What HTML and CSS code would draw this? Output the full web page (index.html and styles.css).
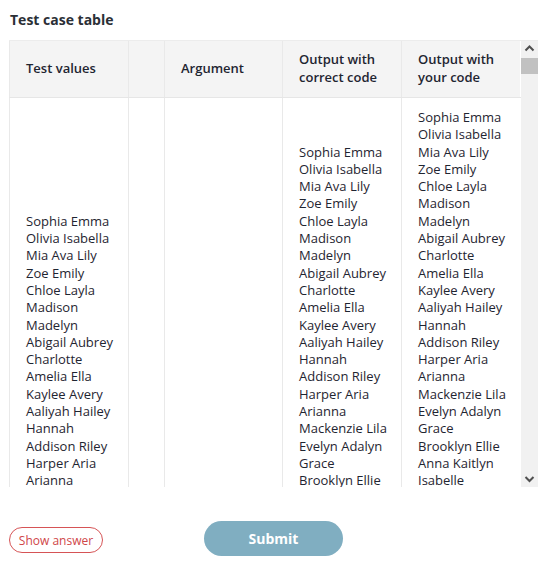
FILE: index.html
```html
<!DOCTYPE html>
<html lang="en">
<head>
<meta charset="utf-8">
<title>Test case table</title>
<link rel="stylesheet" href="styles.css">
</head>
<body>
<div class="page">
  <h2 class="title">Test case table</h2>
  <div class="frame">
    <div class="viewport">
      <table class="cases">
        <colgroup>
          <col class="c-values">
          <col class="c-gap">
          <col class="c-arg">
          <col class="c-out">
          <col class="c-out">
        </colgroup>
        <thead>
          <tr>
            <th>Test values</th>
            <th></th>
            <th>Argument</th>
            <th>Output with correct code</th>
            <th>Output with your code</th>
          </tr>
        </thead>
        <tbody>
          <tr>
            <td>
              <div class="line">Sophia Emma</div><div class="line">Olivia Isabella</div><div class="line">Mia Ava Lily</div><div class="line">Zoe Emily</div><div class="line">Chloe Layla</div><div class="line">Madison</div><div class="line">Madelyn</div><div class="line">Abigail Aubrey</div><div class="line">Charlotte</div><div class="line">Amelia Ella</div><div class="line">Kaylee Avery</div><div class="line">Aaliyah Hailey</div><div class="line">Hannah</div><div class="line">Addison Riley</div><div class="line">Harper Aria</div><div class="line">Arianna</div><div class="line">Mackenzie Lila</div><div class="line">Evelyn Adalyn</div>
            </td>
            <td></td>
            <td></td>
            <td>
              <div class="line">Sophia Emma</div><div class="line">Olivia Isabella</div><div class="line">Mia Ava Lily</div><div class="line">Zoe Emily</div><div class="line">Chloe Layla</div><div class="line">Madison</div><div class="line">Madelyn</div><div class="line">Abigail Aubrey</div><div class="line">Charlotte</div><div class="line">Amelia Ella</div><div class="line">Kaylee Avery</div><div class="line">Aaliyah Hailey</div><div class="line">Hannah</div><div class="line">Addison Riley</div><div class="line">Harper Aria</div><div class="line">Arianna</div><div class="line">Mackenzie Lila</div><div class="line">Evelyn Adalyn</div><div class="line">Grace</div><div class="line">Brooklyn Ellie</div><div class="line">Anna Kaitlyn</div><div class="line">Isabelle</div><div class="line">Natalie</div><div class="line">Leah</div><div class="line">Audrey</div><div class="line">Kylie</div>
            </td>
            <td>
              <div class="line">Sophia Emma</div><div class="line">Olivia Isabella</div><div class="line">Mia Ava Lily</div><div class="line">Zoe Emily</div><div class="line">Chloe Layla</div><div class="line">Madison</div><div class="line">Madelyn</div><div class="line">Abigail Aubrey</div><div class="line">Charlotte</div><div class="line">Amelia Ella</div><div class="line">Kaylee Avery</div><div class="line">Aaliyah Hailey</div><div class="line">Hannah</div><div class="line">Addison Riley</div><div class="line">Harper Aria</div><div class="line">Arianna</div><div class="line">Mackenzie Lila</div><div class="line">Evelyn Adalyn</div><div class="line">Grace</div><div class="line">Brooklyn Ellie</div><div class="line">Anna Kaitlyn</div><div class="line">Isabelle</div><div class="line">Natalie</div><div class="line">Leah</div><div class="line">Audrey</div><div class="line">Kylie</div><div class="line">Sarah</div><div class="line">Alexa</div><div class="line">Peyton</div><div class="line">Ellie</div>
            </td>
          </tr>
        </tbody>
      </table>
    </div>
    <div class="scrollbar" aria-hidden="true">
      <div class="sb-btn">
        <svg width="17" height="17" viewBox="0 0 17 17"><polyline points="4.5,9.5 8.5,5.5 12.5,9.5" fill="none" stroke="#505050" stroke-width="2"/></svg>
      </div>
      <div class="sb-track"><div class="sb-thumb"></div></div>
      <div class="sb-btn">
        <svg width="17" height="17" viewBox="0 0 17 17"><polyline points="4.5,7 8.5,11 12.5,7" fill="none" stroke="#505050" stroke-width="2"/></svg>
      </div>
    </div>
  </div>
  <div class="actions">
    <button class="btn-show" type="button">Show answer</button>
    <button class="btn-submit" type="button">Submit</button>
    <span></span>
  </div>
</div>
</body>
</html>
```

FILE: styles.css
```css
html, body {
  margin: 0;
  padding: 0;
  background: #ffffff;
}

body {
  font-family: "Open Sans", "Liberation Sans", sans-serif;
  color: #1f2531;
}

.page {
  width: 529px;
  padding: 10px 14px 0 9px;
}

.title {
  margin: 0 0 10px 1px;
  font-size: 14px;
  line-height: 20px;
  font-weight: 700;
  color: #2b2f36;
}

.frame {
  display: flex;
  height: 447px;
  border-top: 1px solid #ececec;
  box-sizing: border-box;
}

.viewport {
  flex: 0 0 512px;
  overflow: hidden;
}

.cases {
  width: 512px;
  table-layout: fixed;
  border-collapse: collapse;
  font-size: 13px;
  line-height: 17.3px;
}

.c-values { width: 119px; }
.c-gap { width: 36px; }
.c-arg { width: 118px; }
.c-out { width: 119px; }

.cases th {
  background: #f4f4f4;
  font-weight: 600;
  text-align: left;
  vertical-align: middle;
  padding: 10px 16px 11px 16px;
  height: 35px;
  border-left: 1px solid #e9e9e9;
  border-right: 1px solid #e9e9e9;
  border-bottom: 1px solid #e6e6e6;
  color: #1f2531;
}

.cases td {
  vertical-align: middle;
  padding: 11px 16px 11px 16px;
  border-left: 1px solid #e9e9e9;
  border-right: 1px solid #e9e9e9;
}

.cases th:last-child,
.cases td:last-child {
  border-right: 1px solid #ffffff;
}

.line {
  white-space: nowrap;
}

.scrollbar {
  flex: 0 0 17px;
  display: flex;
  flex-direction: column;
  background: #f1f1f1;
}

.sb-btn {
  height: 17px;
  display: flex;
}

.sb-track {
  flex: 1;
}

.sb-thumb {
  height: 16px;
  background: #c1c1c1;
}

.actions {
  display: grid;
  grid-template-columns: 1fr auto 1fr;
  align-items: center;
  margin-top: 34px;
}

.btn-show {
  justify-self: start;
  margin-top: 3px;
  height: 26px;
  width: 94px;
  padding: 0;
  border: 1px solid #d65456;
  border-radius: 13px;
  background: #ffffff;
  color: #cf4649;
  font-family: "Open Sans", "Liberation Sans", sans-serif;
  font-size: 12px;
}

.btn-submit {
  height: 35px;
  width: 139px;
  padding: 0;
  border: none;
  border-radius: 18px;
  background: #80aec1;
  color: #ffffff;
  font-family: "Open Sans", "Liberation Sans", sans-serif;
  font-size: 14px;
  font-weight: 700;
}
```
